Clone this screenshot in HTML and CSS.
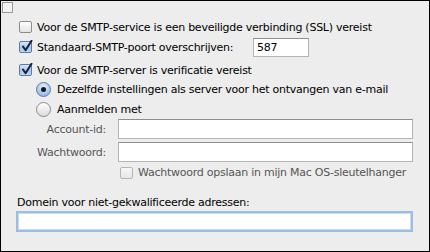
FILE: index.html
```html
<!DOCTYPE html>
<html lang="nl">
<head>
  <meta charset="UTF-8">
  <title>SMTP-instellingen</title>
  <link rel="stylesheet" href="styles.css">
</head>
<body>
  <div class="panel">
    <div class="corner"></div>

    <div class="row row-ssl">
      <span class="check"></span>
      <span class="label">Voor de SMTP-service is een beveiligde verbinding (SSL) vereist</span>
    </div>

    <div class="row row-port">
      <span class="check checked"><svg viewBox="0 0 13 13"><path d="M3 6.5 L5.6 10.2 L11.5 0.8" /></svg></span>
      <span class="label port-label">Standaard-SMTP-poort overschrijven:</span>
      <span class="field port">587</span>
    </div>

    <div class="row row-auth">
      <span class="check checked"><svg viewBox="0 0 13 13"><path d="M3 6.5 L5.6 10.2 L11.5 0.8" /></svg></span>
      <span class="label">Voor de SMTP-server is verificatie vereist</span>
    </div>

    <div class="row row-radio1">
      <span class="radio selected"><span class="dot"></span></span>
      <span class="label">Dezelfde instellingen als server voor het ontvangen van e-mail</span>
    </div>

    <div class="row row-radio2">
      <span class="radio"></span>
      <span class="label">Aanmelden met</span>
    </div>

    <div class="row row-account">
      <span class="side-label">Account-id:</span>
      <span class="field wide"></span>
    </div>

    <div class="row row-password">
      <span class="side-label">Wachtwoord:</span>
      <span class="field wide"></span>
    </div>

    <div class="row row-keychain">
      <span class="check disabled"></span>
      <span class="label muted">Wachtwoord opslaan in mijn Mac OS-sleutelhanger</span>
    </div>

    <div class="domain-label">Domein voor niet-gekwalificeerde adressen:</div>
    <div class="field domain"></div>
  </div>
</body>
</html>
```

FILE: styles.css
```css
html, body {
  margin: 0;
  padding: 0;
  background: #ededed;
}

.panel {
  width: 430px;
  height: 252px;
  box-sizing: border-box;
  border: 1px solid #000;
  background: #ededed;
  font-family: 'DejaVu Sans', sans-serif;
  font-size: 11px;
  letter-spacing: -0.25px;
  color: #000;
  overflow: hidden;
}

.corner {
  width: 9px;
  height: 9px;
  margin: 1px 0 0 1px;
  border: 1px solid #9a9a9a;
  background: #f3f3f3;
}

.row {
  display: flex;
  align-items: center;
  height: 20px;
}

.label {
  white-space: nowrap;
}

.row-ssl {
  margin-top: 4px;
  padding-left: 18px;
}

.row-port {
  padding-left: 18px;
}

.port-label {
  width: 210px;
}

.row-auth {
  margin-top: 3px;
  padding-left: 18px;
}

.row-radio1,
.row-radio2 {
  padding-left: 35px;
  height: 19px;
}

.row-radio2 {
  height: 20px;
}

.check {
  width: 11px;
  height: 10px;
  margin-right: 5px;
  border: 1px solid #8c8c8c;
  border-radius: 2px;
  background: linear-gradient(#ffffff, #e4e4e4);
  position: relative;
  flex: none;
}

.check.checked {
  border-color: #5b7aa6;
  background: linear-gradient(#d9e8f9, #a6c6ec 55%, #bdd7f5);
}

.check svg {
  position: absolute;
  left: 0;
  top: -2px;
  width: 13px;
  height: 13px;
}

.check svg path {
  fill: none;
  stroke: #16213a;
  stroke-width: 2;
  stroke-linecap: round;
  stroke-linejoin: round;
}

.check.disabled {
  border-color: #b5b5b5;
  background: linear-gradient(#f6f6f6, #e6e6e6);
}

.radio {
  width: 13px;
  height: 13px;
  margin-right: 6px;
  border: 1px solid #8a8a8a;
  border-radius: 50%;
  background: linear-gradient(#ffffff, #dcdcdc);
  display: flex;
  align-items: center;
  justify-content: center;
  flex: none;
}

.radio.selected {
  border-color: #5b7aa6;
  background: radial-gradient(circle at 50% 30%, #e5f0fc, #9fc0e8 70%, #7fa6d8);
}

.radio .dot {
  width: 5px;
  height: 5px;
  border-radius: 50%;
  background: #111a2c;
}

.field {
  box-sizing: border-box;
  height: 20px;
  background: #fff;
  border: 1px solid #b4b4b4;
  border-top-color: #8e8e8e;
}

.port {
  width: 56px;
  height: 19px;
  margin-left: 6px;
  padding: 1px 3px;
  line-height: 15px;
}

.side-label {
  width: 105px;
  text-align: right;
  color: #555;
  margin-right: 12px;
  white-space: nowrap;
}

.wide {
  width: 295px;
}

.row-account {
  height: 20px;
}

.row-password {
  margin-top: 3px;
}

.row-keychain {
  margin-top: 1px;
  height: 19px;
  padding-left: 119px;
}

.muted {
  color: #555;
}

.domain-label {
  margin-top: 13px;
  padding-left: 16px;
  height: 16px;
  line-height: 16px;
  white-space: nowrap;
}

.field.domain {
  width: 397px;
  height: 21px;
  margin-left: 15px;
  border: 2px solid #9dbde2;
  box-shadow: inset 0 0 0 1px #c8dcf1;
}
```
